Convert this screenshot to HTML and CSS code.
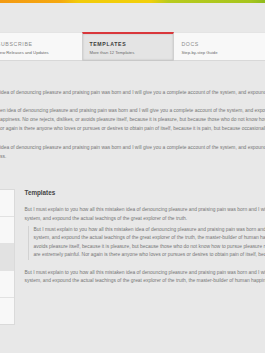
FILE: index.html
```html
<!DOCTYPE html>
<html lang="en">
<head>
<meta charset="utf-8">
<title>Templates</title>
<link rel="stylesheet" href="styles.css">
</head>
<body>
<div class="topbar"></div>
<nav class="nav">
  <a class="tab">
    <span class="tab-title">SUBSCRIBE</span>
    <span class="tab-sub">New Releases and Updates</span>
  </a>
  <a class="tab active">
    <span class="tab-title">TEMPLATES</span>
    <span class="tab-sub">More than 12 Templates</span>
  </a>
  <a class="tab">
    <span class="tab-title">DOCS</span>
    <span class="tab-sub">Step-by-step Guide</span>
  </a>
</nav>
<section class="intro">
  <p>idea of denouncing pleasure and praising pain was born and I will give you a complete account of the system, and expound the actual teachings</p>
  <p>en idea of denouncing pleasure and praising pain was born and I will give you a complete account of the system, and expound the actual<br>appiness. No one rejects, dislikes, or avoids pleasure itself, because it is pleasure, but because those who do not know how to pursue<br>or again is there anyone who loves or pursues or desires to obtain pain of itself, because it is pain, but because occasionally circumstances</p>
  <p>idea of denouncing pleasure and praising pain was born and I will give you a complete account of the system, and expound the actual teachings<br>ss.</p>
</section>
<section class="main">
  <ul class="side">
    <li></li>
    <li></li>
    <li class="on"></li>
    <li></li>
    <li></li>
  </ul>
  <article class="content">
    <h2>Templates</h2>
    <p>But I must explain to you how all this mistaken idea of denouncing pleasure and praising pain was born and I will give you a complete account of the<br>system, and expound the actual teachings of the great explorer of the truth.</p>
    <blockquote>But I must explain to you how all this mistaken idea of denouncing pleasure and praising pain was born and I will give you a complete account<br>system, and expound the actual teachings of the great explorer of the truth, the master-builder of human happiness. No one rejects, dislikes, or<br>avoids pleasure itself, because it is pleasure, but because those who do not know how to pursue pleasure rationally encounter consequences<br>are extremely painful. Nor again is there anyone who loves or pursues or desires to obtain pain of itself, because it is pain, but because</blockquote>
    <p>But I must explain to you how all this mistaken idea of denouncing pleasure and praising pain was born and I will give you a complete account of the<br>system, and expound the actual teachings of the great explorer of the truth, the master-builder of human happiness. No one rejects, dislikes</p>
  </article>
</section>
</body>
</html>
```
FILE: styles.css
```css
html, body {
  margin: 0;
  padding: 0;
}
body {
  background: #e8e8e8;
  font-family: "Liberation Sans", Arial, sans-serif;
  color: #767676;
  overflow: hidden;
  width: 265px;
  height: 353px;
}
.topbar {
  height: 3px;
  background: linear-gradient(90deg, #f39a12 0px, #f5a80f 60px, #f2cb0a 78px, #f2d00a 150px, #b9cb1e 168px, #a6c51d 250px, #8fbb1c 265px);
}
.nav {
  display: flex;
  margin: 29px 0 0 -10.5px;
  height: 27px;
  background: #f8f8f8;
  border-top: 1px solid #e4e4e4;
  border-bottom: 1px solid #d8d8d8;
}
.tab {
  flex: none;
  width: 92.3px;
  box-sizing: border-box;
  padding: 8px 0 0 7.3px;
  display: flex;
  flex-direction: column;
  gap: 2.6px;
}
.tab.active {
  background: #e4e4e4;
  border-top: 2px solid #d9373b;
  margin-top: -1px;
  padding-top: 7px;
  box-shadow: inset 0 0 2px rgba(0,0,0,0.18);
  border-left: 1px solid #d0d0d0;
  border-right: 1px solid #d0d0d0;
  border-bottom: 1px solid #c8c8c8;
  margin-bottom: -1px;
  padding-left: 6.6px;
}
.tab-title {
  font-size: 5.2px;
  line-height: 6px;
  letter-spacing: 0.65px;
  color: #8a8a8a;
}
.tab.active .tab-title {
  color: #3a3a3a;
  font-weight: bold;
}
.tab-sub {
  font-size: 4.2px;
  line-height: 5px;
  color: #6a6a6a;
}
.intro {
  margin: 27.5px 0 0 0;
  font-size: 4.9px;
  line-height: 8.9px;
  white-space: nowrap;
}
.intro p {
  margin: 0 0 10px 0;
}
.main {
  display: flex;
  align-items: flex-start;
  margin-top: 27px;
}
.side {
  list-style: none;
  margin: 0 0 0 -87px;
  padding: 0;
  width: 100px;
  flex: none;
  background: #f8f8f8;
  border: 1px solid #dadada;
}
.side li {
  height: 26px;
  border-top: 1px solid #e2e2e2;
}
.side li:first-child {
  border-top: none;
}
.side li.on {
  background: #e2e2e2;
}
.content {
  padding-left: 9.5px;
  font-size: 4.9px;
  line-height: 8.6px;
  white-space: nowrap;
}
.content h2 {
  margin: 0;
  font-size: 6.3px;
  line-height: 8.6px;
  color: #444;
  font-weight: bold;
}
.content p {
  margin: 8.8px 0 0 0;
}
.content blockquote {
  margin: 2px 0 7px 3px;
  padding-left: 5px;
  border-left: 1px solid #d2d2d2;
}
```
